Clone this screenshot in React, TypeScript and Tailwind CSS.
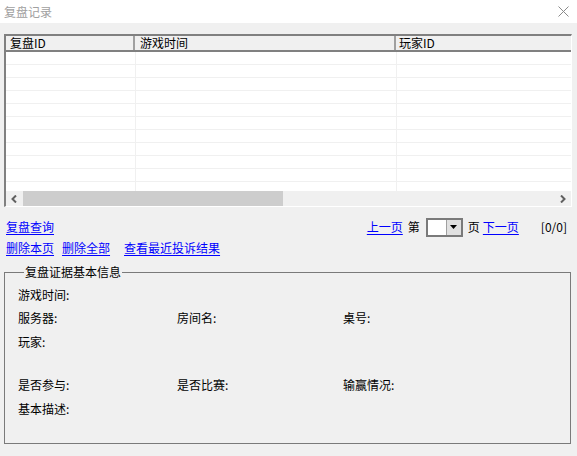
const font = "font-['SimSun','Noto_Sans_CJK_SC',sans-serif]";

const rows = Array.from({ length: 11 }, (_, i) => i);

function Link({ children }: { children: React.ReactNode }) {
  return <span className="text-[#0000ff] underline underline-offset-2 cursor-pointer">{children}</span>;
}

export default function App() {
  return (
    <div className={`w-[577px] h-[456px] flex flex-col text-[12px] leading-[12px] text-black ${font}`}>
      {/* title bar */}
      <div className="h-[23px] bg-white flex items-center justify-between pl-[4px] pr-[8px]">
        <span className="text-[#a0a0a0] text-[12px]">复盘记录</span>
        <svg width="11" height="11" viewBox="0 0 11 11">
          <path d="M0.5 0.5 L10.5 10.5 M10.5 0.5 L0.5 10.5" stroke="#8a8a8a" strokeWidth="1" />
        </svg>
      </div>

      <div className="flex-1 bg-[#f0f0f0] flex flex-col px-[4px] pt-[11px]">
        {/* list */}
        <div className="h-[173px] w-[568px] border-l-2 border-t-2 border-[#808080] border-r border-b border-r-white border-b-white bg-white flex flex-col">
          <div className="h-[16px] flex bg-[#f0f0f0] border-b-2 border-[#808080]">
            <div className="w-[129px] pl-[4px] flex items-center border-r-2 border-r-[#a0a0a0]">复盘ID</div>
            <div className="w-[261px] pl-[5px] flex items-center border-r-2 border-r-[#a0a0a0]">游戏时间</div>
            <div className="flex-1 pl-[3px] flex items-center">玩家ID</div>
          </div>
          <div className="flex-1 overflow-hidden">
            {rows.map(r => (
              <div key={r} className="h-[13px] flex border-b border-[#f0f0f0]">
                <div className="w-[130px] border-r border-[#f0f0f0]" />
                <div className="w-[261px] border-r border-[#f0f0f0]" />
                <div className="flex-1" />
              </div>
            ))}
          </div>
          <div className="h-[15px] flex bg-[#f0f0f0]">
            <div className="w-[17px] flex items-center justify-center">
              <svg width="7" height="8" viewBox="0 0 7 8">
                <path d="M5 0.5 L1.5 4 L5 7.5" stroke="#606060" strokeWidth="2" fill="none" />
              </svg>
            </div>
            <div className="w-[260px] bg-[#cdcdcd]" />
            <div className="flex-1" />
            <div className="w-[17px] flex items-center justify-center">
              <svg width="7" height="8" viewBox="0 0 7 8">
                <path d="M2 0.5 L5.5 4 L2 7.5" stroke="#606060" strokeWidth="2" fill="none" />
              </svg>
            </div>
          </div>
        </div>

        {/* links + pager */}
        <div className="flex items-center justify-between mt-[11px] pl-[2px] h-[18px]">
          <Link>复盘查询</Link>
          <div className="flex items-center">
            <Link>上一页</Link>
            <span className="ml-[5px]">第</span>
            <div className="ml-[6px] w-[37px] h-[19px] border-2 border-[#7a7a7a] bg-white flex justify-end">
              <div className="w-[15px] h-full bg-[#e1e1e1] border-l border-[#a0a0a0] flex items-center justify-center">
                <svg width="7" height="4" viewBox="0 0 7 4">
                  <path d="M0 0 L7 0 L3.5 4 Z" fill="#000" />
                </svg>
              </div>
            </div>
            <span className="ml-[5px]">页</span>
            <span className="ml-[3px]"><Link>下一页</Link></span>
            <span className="ml-[22px] mr-[6px]">[0/0]</span>
          </div>
        </div>
        <div className="flex items-center gap-[8px] mt-[5px] pl-[2px] h-[14px]">
          <Link>删除本页</Link>
          <Link>删除全部</Link>
          <span className="ml-[6px]"><Link>查看最近投诉结果</Link></span>
        </div>

        {/* group box */}
        <fieldset className="mt-[10px] w-[567px] h-[179px] border border-[#7a7a7a] px-[13px] pt-[4px] pb-0">
          <legend className="px-[1px] ml-[6px] leading-[14px]">复盘证据基本信息</legend>
          <div className="flex flex-col">
            <div className="h-[23px] flex items-center">游戏时间:</div>
            <div className="h-[23px] flex items-center">
              <span className="w-[159px]">服务器:</span>
              <span className="w-[166px]">房间名:</span>
              <span>桌号:</span>
            </div>
            <div className="h-[26px] flex items-center">玩家:</div>
            <div className="h-[17px]" />
            <div className="h-[25px] flex items-center">
              <span className="w-[159px]">是否参与:</span>
              <span className="w-[166px]">是否比赛:</span>
              <span>输赢情况:</span>
            </div>
            <div className="h-[23px] flex items-center">基本描述:</div>
          </div>
        </fieldset>
      </div>
    </div>
  );
}
